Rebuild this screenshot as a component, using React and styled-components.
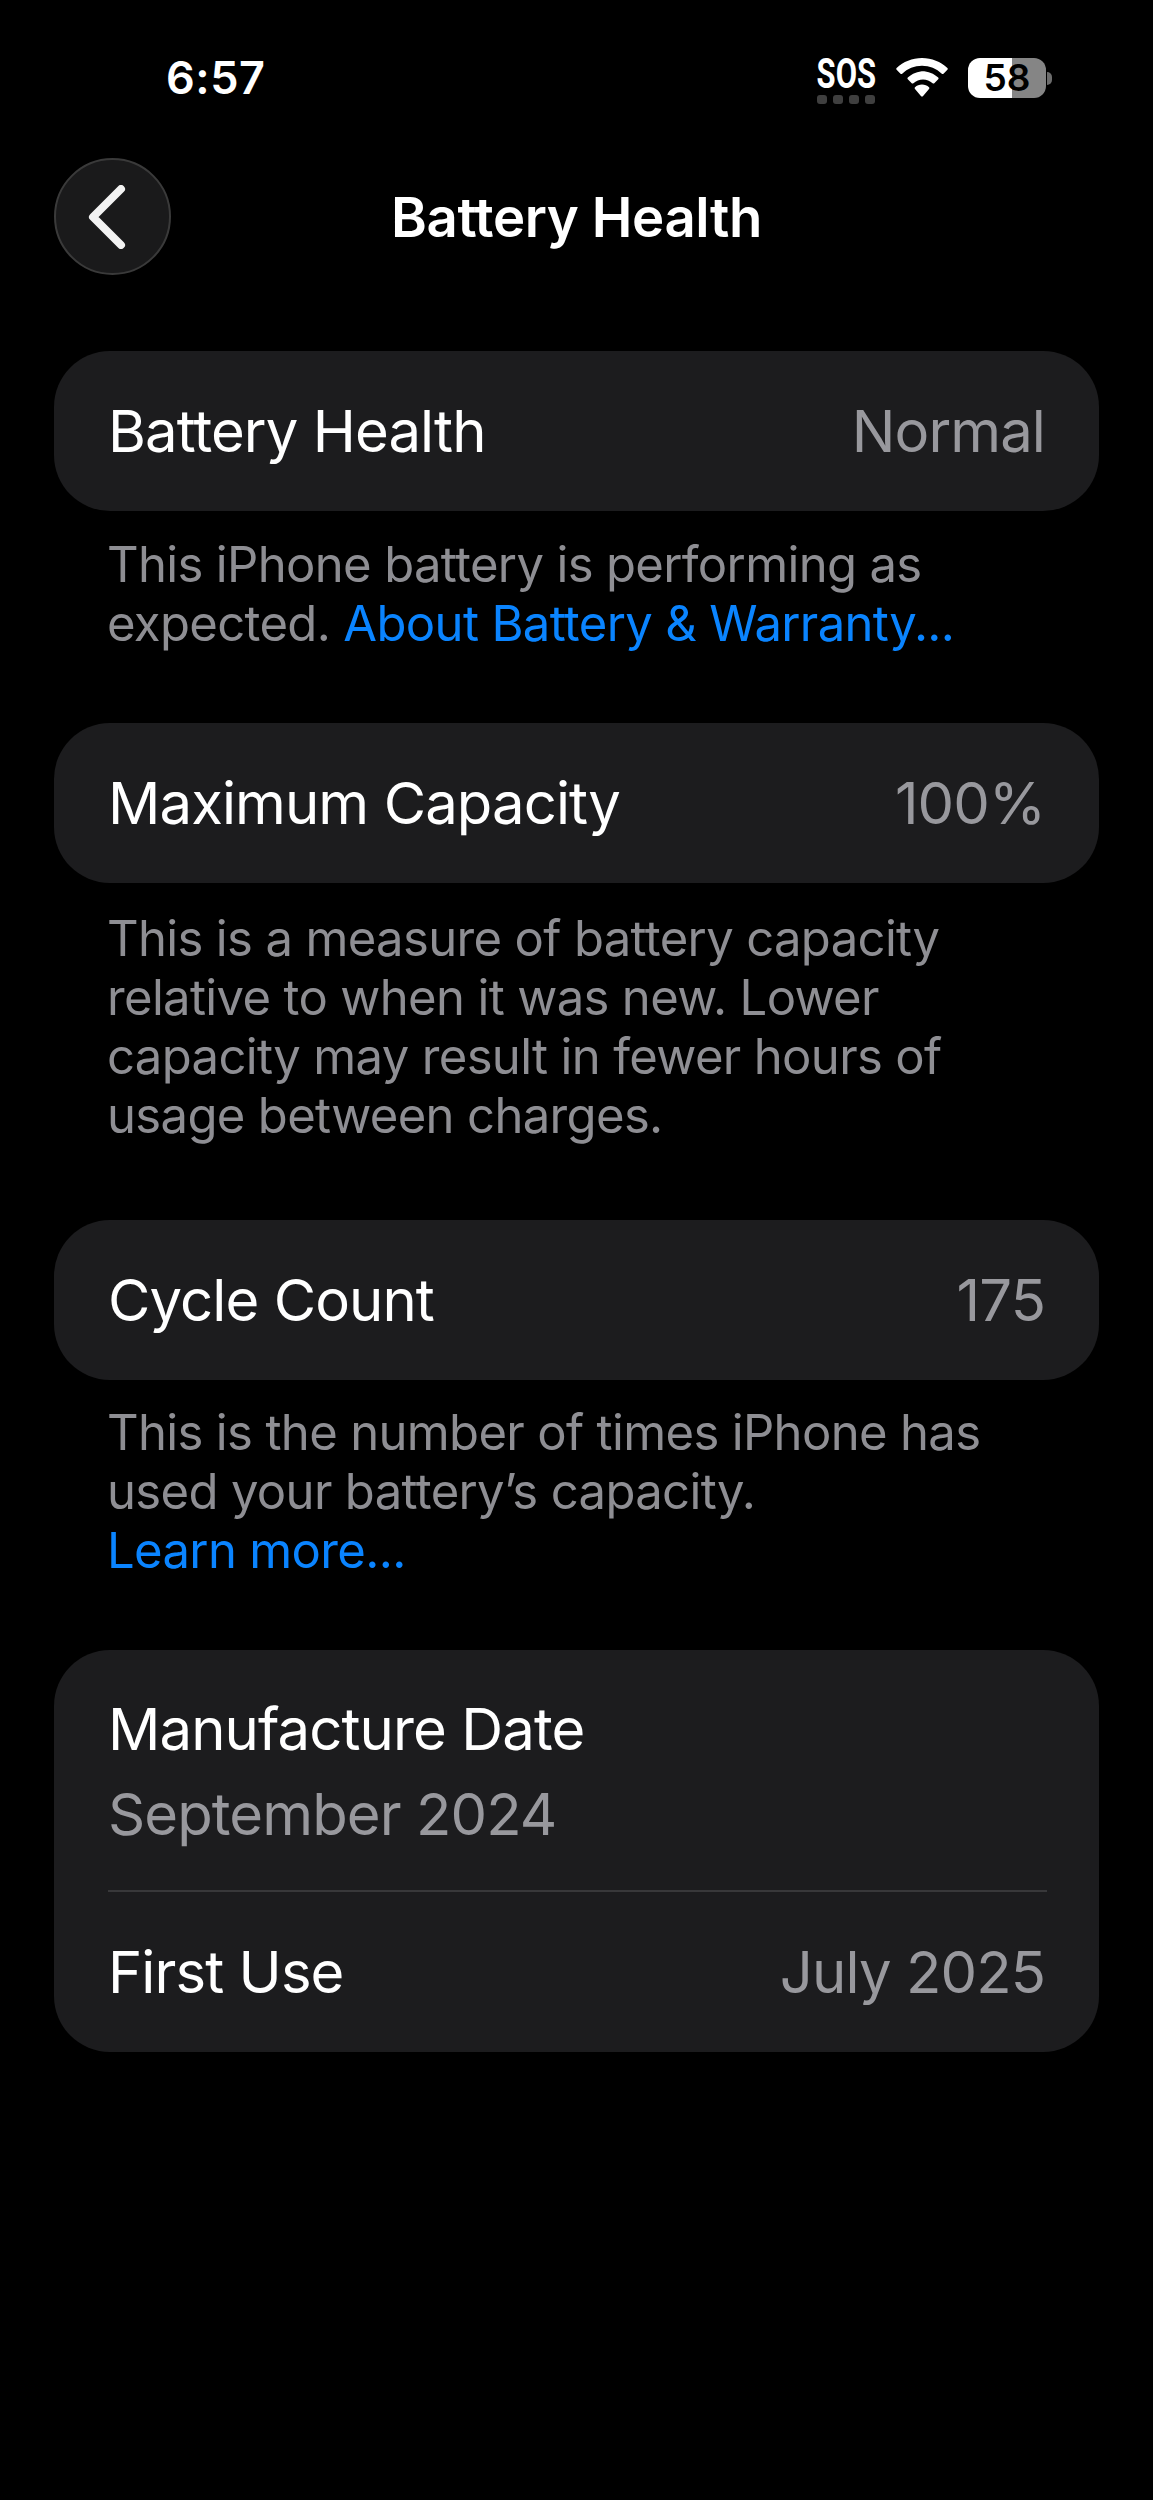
import React from "react";
import styled, { createGlobalStyle } from "styled-components";

const GlobalStyle = createGlobalStyle`
  html, body {
    margin: 0;
    padding: 0;
    background: #000;
  }
  body {
    font-family: Inter, "Liberation Sans", sans-serif;
    -webkit-font-smoothing: antialiased;
  }
`;

const Page = styled.div`
  width: 1153px;
  height: 2500px;
  box-sizing: border-box;
  background: #000;
  color: #fff;
  overflow: hidden;
`;

const StatusBar = styled.div`
  height: 100px;
  box-sizing: border-box;
  padding: 57px 101px 0 166px;
  display: flex;
  justify-content: space-between;
  align-items: flex-start;
`;

const Clock = styled.div`
  font-size: 45px;
  line-height: 42px;
  font-weight: 600;
  letter-spacing: 0.5px;
`;

const StatusIcons = styled.div`
  display: flex;
  align-items: flex-start;
  padding-top: 1px;
`;

const SosBox = styled.div`
  width: 62px;
  margin-right: 19px;
  display: flex;
  flex-direction: column;
  align-items: center;
`;

const SosText = styled.div`
  font-family: Roboto, sans-serif;
  font-size: 43px;
  line-height: 30px;
  height: 30px;
  font-weight: 700;
  transform: scaleX(0.72);
  letter-spacing: 0;
`;

const SosDots = styled.div`
  display: flex;
  gap: 6px;
  margin-top: 7px;
`;

const SosDot = styled.span`
  width: 10px;
  height: 9px;
  border-radius: 3px;
  background: #3f3f3f;
`;

const WifiIcon = styled.svg`
  width: 52px;
  height: 39px;
  margin-right: 20px;
`;

const BatteryBody = styled.div`
  width: 78px;
  height: 40px;
  border-radius: 12px;
  background: linear-gradient(90deg, #fff 0 ${p => p.$level}%, #858585 ${p => p.$level}% 100%);
  color: #000;
  font-size: 37px;
  font-weight: 600;
  line-height: 40px;
  text-align: center;
`;

const BatteryNub = styled.div`
  width: 5px;
  height: 13px;
  margin: 14px 0 0 1px;
  border-radius: 0 5px 5px 0;
  background: #6c6c6c;
`;

const Header = styled.div`
  height: 117px;
  margin-top: 58px;
  padding: 0 54px;
  display: flex;
  align-items: center;
  position: relative;
`;

const BackButton = styled.div`
  width: 117px;
  height: 117px;
  box-sizing: border-box;
  border-radius: 50%;
  background: #1a1a1b;
  border: 2px solid #3a3a3a;
  display: flex;
  align-items: center;
  justify-content: center;
`;

const Chevron = styled.svg`
  width: 38px;
  height: 64px;
  margin-right: 11px;
`;

const Title = styled.div`
  position: absolute;
  left: 0;
  right: 0;
  text-align: center;
  font-size: 54.5px;
  font-weight: 600;
  letter-spacing: -0.4px;
`;

const Content = styled.div`
  padding: 76px 54px 0;
`;

const Section = styled.section`
  margin-bottom: ${p => p.$gap}px;
`;

const Card = styled.div`
  background: #1c1c1e;
  border-radius: 56px;
  padding: 0 54px;
`;

const Row = styled.div`
  height: 160px;
  display: flex;
  align-items: center;
  justify-content: space-between;
`;

const Label = styled.div`
  font-size: 58px;
  line-height: 66px;
  color: #fff;
  letter-spacing: -0.9px;
`;

const Value = styled.div`
  font-size: 58px;
  line-height: 66px;
  color: #98989d;
  letter-spacing: -0.9px;
`;

const StackRow = styled.div`
  height: 240px;
  box-sizing: border-box;
  padding-top: 46px;
  ${Value} {
    margin-top: 19px;
  }
`;

const Divider = styled.div`
  height: 2px;
  margin-right: -2px;
  background: #38383a;
`;

const Note = styled.p`
  margin: 0;
  padding: ${p => p.$top}px 53px 0;
  font-size: 49px;
  line-height: 59px;
  color: #8e8e93;
  letter-spacing: -0.65px;
`;

const Link = styled.span`
  color: #0a84ff;
`;

const Wifi = () => (
  <WifiIcon viewBox="0 0 52 39">
    <path
      fill="#fff"
      d="M26 0c9.8 0 18.7 3.8 25.4 10 .5.5.5 1.2 0 1.7l-3.9 4c-.5.5-1.2.5-1.7 0C40.500 10.800 33.600 7.800 26 7.800S11.500 10.800 6.200 15.700c-.5.5-1.200.5-1.700 0l-3.900-4c-.5-.5-.5-1.200 0-1.700C7.300 3.800 16.200 0 26 0z"
    />
    <path
      fill="#fff"
      d="M26 13.200c6.200 0 11.900 2.400 16.200 6.300.5.5.5 1.200 0 1.700l-3.900 4c-.5.5-1.200.5-1.700 0-2.600-2.300-6-3.700-9.600-3.700s-7 1.400-9.600 3.700c-.5.5-1.200.5-1.700 0l-3.900-4c-.5-.5-.5-1.200 0-1.700 4.300-3.900 10-6.300 16.200-6.300z"
    />
    <path
      fill="#fff"
      d="M26 26.500c2.700 0 5.200 1 7 2.700.5.5.5 1.200 0 1.700l-6.100 7.300c-.5.5-1.300.5-1.800 0L19 30.900c-.5-.5-.5-1.200 0-1.700 1.800-1.700 4.300-2.700 7-2.700z"
    />
  </WifiIcon>
);

const App = () => {
  return (
    <Page>
      <GlobalStyle />
      <StatusBar>
        <Clock>6:57</Clock>
        <StatusIcons>
          <SosBox>
            <SosText>SOS</SosText>
            <SosDots>
              <SosDot />
              <SosDot />
              <SosDot />
              <SosDot />
            </SosDots>
          </SosBox>
          <Wifi />
          <BatteryBody $level={57}>58</BatteryBody>
          <BatteryNub />
        </StatusIcons>
      </StatusBar>

      <Header>
        <BackButton>
          <Chevron viewBox="0 0 38 64" fill="none">
            <path
              d="M33 4 5 32l28 28"
              stroke="#f2f2f2"
              strokeWidth="8"
              strokeLinecap="round"
              strokeLinejoin="round"
            />
          </Chevron>
        </BackButton>
        <Title>Battery Health</Title>
      </Header>

      <Content>
        <Section $gap={70}>
          <Card>
            <Row>
              <Label>Battery Health</Label>
              <Value>Normal</Value>
            </Row>
          </Card>
          <Note $top={24}>
            This iPhone battery is performing as
            <br />
            expected. <Link>About Battery &amp; Warranty...</Link>
          </Note>
        </Section>

        <Section $gap={75}>
          <Card>
            <Row>
              <Label>Maximum Capacity</Label>
              <Value>100%</Value>
            </Row>
          </Card>
          <Note $top={26}>
            This is a measure of battery capacity
            <br />
            relative to when it was new. Lower
            <br />
            capacity may result in fewer hours of
            <br />
            usage between charges.
          </Note>
        </Section>

        <Section $gap={70}>
          <Card>
            <Row>
              <Label>Cycle Count</Label>
              <Value>175</Value>
            </Row>
          </Card>
          <Note $top={23}>
            This is the number of times iPhone has
            <br />
            used your battery’s capacity.
            <br />
            <Link>Learn more...</Link>
          </Note>
        </Section>

        <Card>
          <StackRow>
            <Label>Manufacture Date</Label>
            <Value>September 2024</Value>
          </StackRow>
          <Divider />
          <Row>
            <Label>First Use</Label>
            <Value>July 2025</Value>
          </Row>
        </Card>
      </Content>
    </Page>
  );
};

export default App;
